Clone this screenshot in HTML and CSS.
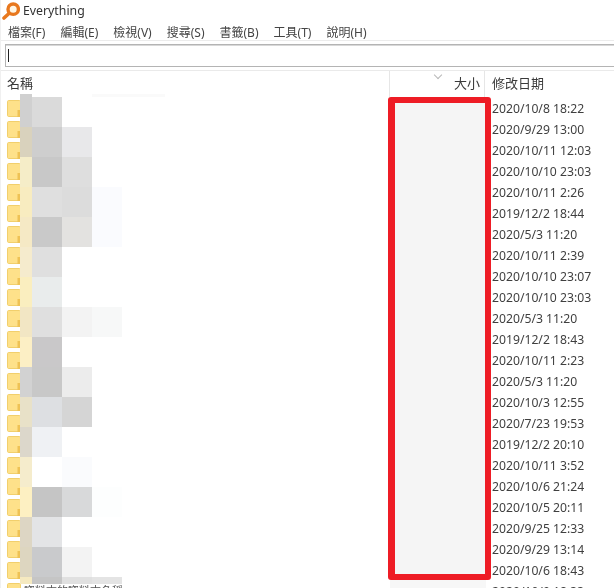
FILE: index.html
```html
<!DOCTYPE html>
<html lang="zh-Hant">
<head>
<meta charset="utf-8">
<title>Everything</title>
<link rel="stylesheet" href="styles.css">
</head>
<body>
<svg class="defs" width="0" height="0" aria-hidden="true"><defs>
<symbol id="folder" viewBox="0 0 14 17">
<rect x="0.5" y="0.5" width="13" height="16" rx="1.2" fill="#fde08a" stroke="#f2cf6c"/>
<rect x="1.5" y="1.5" width="11" height="14" fill="#fee18a"/>
<rect x="10.5" y="10" width="3.5" height="7" fill="#eec255"/>
</symbol>
</defs></svg>
<div class="app">
  <header class="titlebar">
    <svg class="logo" width="18" height="18" viewBox="0 0 18 18" aria-hidden="true">
      <path d="M2 16 L7.5 11" stroke="#e8781e" stroke-width="3.6" stroke-linecap="round" fill="none"/>
      <circle cx="11.2" cy="7.2" r="5.2" fill="#fff6e4" stroke="#e8781e" stroke-width="3.4"/>
    </svg>
    <span class="title">Everything</span>
  </header>
  <nav class="menubar">
    <span>檔案(F)</span><span>編輯(E)</span><span>檢視(V)</span><span>搜尋(S)</span><span>書籤(B)</span><span>工具(T)</span><span>說明(H)</span>
  </nav>
  <div class="searchwrap"><div class="search"><i class="caret"></i></div></div>
  <div class="colhead">
    <div class="cname">名稱</div>
    <div class="csize"><i class="chev"></i>大小</div>
    <div class="cdate">修改日期</div>
  </div>
  <main class="list">
    <div class="row"><div class="name"><svg class="fi"><use href="#folder"/></svg></div><div class="size"></div><div class="date">2020/10/8 18:22</div></div>
    <div class="row"><div class="name"><svg class="fi"><use href="#folder"/></svg></div><div class="size"></div><div class="date">2020/9/29 13:00</div></div>
    <div class="row"><div class="name"><svg class="fi"><use href="#folder"/></svg></div><div class="size"></div><div class="date">2020/10/11 12:03</div></div>
    <div class="row"><div class="name"><svg class="fi"><use href="#folder"/></svg></div><div class="size"></div><div class="date">2020/10/10 23:03</div></div>
    <div class="row"><div class="name"><svg class="fi"><use href="#folder"/></svg></div><div class="size"></div><div class="date">2020/10/11 2:26</div></div>
    <div class="row"><div class="name"><svg class="fi"><use href="#folder"/></svg></div><div class="size"></div><div class="date">2019/12/2 18:44</div></div>
    <div class="row"><div class="name"><svg class="fi"><use href="#folder"/></svg></div><div class="size"></div><div class="date">2020/5/3 11:20</div></div>
    <div class="row"><div class="name"><svg class="fi"><use href="#folder"/></svg></div><div class="size"></div><div class="date">2020/10/11 2:39</div></div>
    <div class="row"><div class="name"><svg class="fi"><use href="#folder"/></svg></div><div class="size"></div><div class="date">2020/10/10 23:07</div></div>
    <div class="row"><div class="name"><svg class="fi"><use href="#folder"/></svg></div><div class="size"></div><div class="date">2020/10/10 23:03</div></div>
    <div class="row"><div class="name"><svg class="fi"><use href="#folder"/></svg></div><div class="size"></div><div class="date">2020/5/3 11:20</div></div>
    <div class="row"><div class="name"><svg class="fi"><use href="#folder"/></svg></div><div class="size"></div><div class="date">2019/12/2 18:43</div></div>
    <div class="row"><div class="name"><svg class="fi"><use href="#folder"/></svg></div><div class="size"></div><div class="date">2020/10/11 2:23</div></div>
    <div class="row"><div class="name"><svg class="fi"><use href="#folder"/></svg></div><div class="size"></div><div class="date">2020/5/3 11:20</div></div>
    <div class="row"><div class="name"><svg class="fi"><use href="#folder"/></svg></div><div class="size"></div><div class="date">2020/10/3 12:55</div></div>
    <div class="row"><div class="name"><svg class="fi"><use href="#folder"/></svg></div><div class="size"></div><div class="date">2020/7/23 19:53</div></div>
    <div class="row"><div class="name"><svg class="fi"><use href="#folder"/></svg></div><div class="size"></div><div class="date">2019/12/2 20:10</div></div>
    <div class="row"><div class="name"><svg class="fi"><use href="#folder"/></svg></div><div class="size"></div><div class="date">2020/10/11 3:52</div></div>
    <div class="row"><div class="name"><svg class="fi"><use href="#folder"/></svg></div><div class="size"></div><div class="date">2020/10/6 21:24</div></div>
    <div class="row"><div class="name"><svg class="fi"><use href="#folder"/></svg></div><div class="size"></div><div class="date">2020/10/5 20:11</div></div>
    <div class="row"><div class="name"><svg class="fi"><use href="#folder"/></svg></div><div class="size"></div><div class="date">2020/9/25 12:33</div></div>
    <div class="row"><div class="name"><svg class="fi"><use href="#folder"/></svg></div><div class="size"></div><div class="date">2020/9/29 13:14</div></div>
    <div class="row"><div class="name"><svg class="fi"><use href="#folder"/></svg></div><div class="size"></div><div class="date">2020/10/6 18:43</div></div>
    <div class="row"><div class="name"><svg class="fi"><use href="#folder"/></svg><span class="hidden-name">資料夾的資料夾名稱資料</span></div><div class="size"></div><div class="date">2020/10/9 18:33</div></div>

    <div class="mosaic" aria-hidden="true">
      <i class="d0d0d0"></i><i class="dadada"></i><i></i><i></i>
      <i class="d9d2bd"></i><i class="cecece"></i><i class="e8e8ea"></i><i></i>
      <i class="f5edc8"></i><i class="c8c8c8"></i><i class="dedede"></i><i></i>
      <i class="f8ecc0"></i><i class="dfdfdf"></i><i class="dcdcdc"></i><i class="fafbfe"></i>
      <i class="f5e9c5"></i><i class="c9c9c9"></i><i class="e3e2e0"></i><i class="fafbfe"></i>
      <i class="f5ebcd"></i><i class="dfdfdf"></i><i></i><i></i>
      <i class="faeebf"></i><i class="e9ecec"></i><i></i><i></i>
      <i class="f2e6c4"></i><i class="dfdfdf"></i><i class="f3f3f3"></i><i class="f7f8f8"></i>
      <i class="fcefc5"></i><i class="c9c8c9"></i><i></i><i></i>
      <i class="d2d2d2"></i><i class="c8c8c8"></i><i class="ececec"></i><i></i>
      <i class="e8e1c8"></i><i class="dddfe2"></i><i class="d5d5d5"></i><i></i>
      <i class="dcd7cb"></i><i class="eff1f4"></i><i></i><i></i>
      <i class="f5eccc"></i><i class="ffffff"></i><i class="fafbfd"></i><i></i>
      <i class="fdf0c2"></i><i class="c5c5c5"></i><i class="d8d9da"></i><i class="fdfefe"></i>
      <i class="ddd6c4"></i><i class="e3e4e6"></i><i></i><i></i>
      <i class="ddd6c0"></i><i class="c9cacc"></i><i class="f3f3f3"></i><i></i>
      <i class="f5e9c0"></i><i class="c5c5c5"></i><i class="e0e0e0"></i><i class="e4e4e4"></i>
    </div>
    <div class="redbox" aria-hidden="true"></div>
  </main>
</div>
</body>
</html>
```
FILE: styles.css
```css
* { box-sizing: border-box; }
html, body { margin: 0; height: 100%; background: #fff; overflow: hidden; }
.defs { position: absolute; }
.app {
  height: 588px;
  overflow: hidden;
  display: flex;
  flex-direction: column;
  font-family: "Noto Sans", "Noto Sans CJK TC", sans-serif;
  font-size: 12px;
  color: #3c3c3c;
  border-left: 1px solid #f0f0f0;
  filter: blur(0.35px);
}
.titlebar {
  height: 22px;
  flex: none;
  display: flex;
  align-items: center;
  gap: 3px;
  padding-left: 1px;
  color: #333;
}
.logo { flex: none; }
.title { font-size: 12.3px; line-height: 22px; }
.menubar {
  height: 19px;
  flex: none;
  display: flex;
  gap: 15px;
  padding: 1px 0 0 7px;
  line-height: 20px;
  font-size: 12px;
  color: #444;
  border-bottom: 1px solid #ececec;
}
.searchwrap {
  flex: none;
  height: 30px;
  padding: 3px 0 0 4px;
  border-bottom: 1px solid #eaeaea;
}
.search {
  height: 23px;
  border: 1px solid #b4b4b4;
  border-right: 0;
  box-shadow: inset 0 1px 0 #d8d8d8;
  padding: 4px 0 0 2px;
}
.caret { display: block; width: 1px; height: 13px; background: #222; }
.colhead {
  flex: none;
  height: 26px;
  display: flex;
  font-size: 13px;
  line-height: 25px;
  color: #3a3a3a;
}
.cname { width: 388px; padding-left: 6px; }
.csize {
  width: 96px;
  padding-right: 4px;
  text-align: right;
  border-left: 1px solid #e6e6e6;
  border-right: 1px solid #e6e6e6;
  position: relative;
}
.chev {
  position: absolute;
  left: 45px;
  top: 1px;
  width: 6px;
  height: 6px;
  transform: rotate(45deg);
  border-right: 1px solid #b8b8b8;
  border-bottom: 1px solid #b8b8b8;
}
.cdate { padding-left: 7px; }
.list { position: relative; flex: 1; }
.row { display: flex; height: 21px; line-height: 23px; }
.name { width: 389px; display: flex; gap: 3px; padding: 3px 0 0 6px; color: #555; }
.fi { width: 14px; height: 17px; flex: none; }
.hidden-name { line-height: 15px; white-space: nowrap; overflow: hidden; width: 98px; font-size: 11px; }
.size { width: 96px; background: #f7f7f7; }
.date { padding-left: 6px; white-space: nowrap; font-size: 12.2px; color: #3f3f3f; }
.mosaic {
  position: absolute;
  left: 19px;
  top: 0;
  display: grid;
  grid-template-columns: 12px 30px 30px 30px;
  grid-template-rows: repeat(16, 30px) 7px;
}
.mosaic::before {
  content: "";
  position: absolute;
  left: 0;
  top: -3px;
  width: 12px;
  height: 3px;
  background: #d0d0d0;
}
.mosaic::after {
  content: "";
  position: absolute;
  left: 72px;
  top: -3px;
  width: 73px;
  height: 3px;
  background: #fafafa;
}
.mosaic i { display: block; }
.d0d0d0 { background: #d0d0d0; } .dadada { background: #dadada; }
.d9d2bd { background: #d9d2bd; } .cecece { background: #cecece; } .e8e8ea { background: #e8e8ea; }
.f5edc8 { background: #f5edc8; } .c8c8c8 { background: #c8c8c8; } .dedede { background: #dedede; }
.f8ecc0 { background: #f8ecc0; } .dfdfdf { background: #dfdfdf; } .dcdcdc { background: #dcdcdc; }
.fafbfe { background: #fafbfe; } .f5e9c5 { background: #f5e9c5; } .c9c9c9 { background: #c9c9c9; }
.e3e2e0 { background: #e3e2e0; } .f5ebcd { background: #f5ebcd; } .faeebf { background: #faeebf; }
.e9ecec { background: #e9ecec; } .f2e6c4 { background: #f2e6c4; } .f3f3f3 { background: #f3f3f3; }
.f7f8f8 { background: #f7f8f8; } .fcefc5 { background: #fcefc5; } .c9c8c9 { background: #c9c8c9; }
.d2d2d2 { background: #d2d2d2; } .ececec { background: #ececec; } .e8e1c8 { background: #e8e1c8; }
.dddfe2 { background: #dddfe2; } .d5d5d5 { background: #d5d5d5; } .dcd7cb { background: #dcd7cb; }
.eff1f4 { background: #eff1f4; } .f5eccc { background: #f5eccc; } .ffffff { background: #ffffff; }
.fafbfd { background: #fafbfd; } .fdf0c2 { background: #fdf0c2; } .c5c5c5 { background: #c5c5c5; }
.d8d9da { background: #d8d9da; } .fdfefe { background: #fdfefe; } .ddd6c4 { background: #ddd6c4; }
.e3e4e6 { background: #e3e4e6; } .ddd6c0 { background: #ddd6c0; } .c9cacc { background: #c9cacc; }
.f5e9c0 { background: #f5e9c0; } .e0e0e0 { background: #e0e0e0; } .e4e4e4 { background: #e4e4e4; }
.redbox {
  position: absolute;
  left: 387px;
  top: 0;
  width: 103px;
  height: 483px;
  background: #f5f5f5;
  border: 6px solid #ee1c25;
  border-left-width: 7px;
  border-radius: 3px;
}
```
